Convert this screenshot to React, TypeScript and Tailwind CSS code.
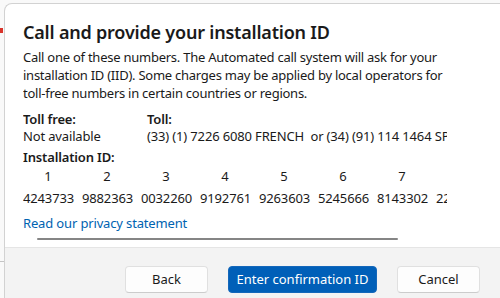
import React from 'react';

const ids = ['4243733', '9882363', '0032260', '9192761', '9263603', '5245666', '8143302', '2213918', '6640451'];

export default function App() {
  return (
    <div
      className="w-[500px] h-[298px] overflow-hidden bg-[#f9f9f9] flex"
      style={{ fontFamily: '"Segoe UI", "Noto Sans", sans-serif' }}
    >
      <div className="w-[4px] shrink-0 flex flex-col">
        <div className="h-[28px]" />
        <div className="w-[3px] h-[5px] bg-[#d9342b]" />
        <div className="h-[228px]" />
        <div className="w-[4px] h-[1px] bg-[#c4c4c4]" />
      </div>

      <div className="mt-[3px] w-[500px] h-[300px] shrink-0 flex flex-col rounded-tl-[8px] border-l border-t border-[#d2d2d2] bg-white overflow-hidden">
        <div className="h-[243px] pl-[18px] pt-[15px] flex flex-col">
          <div className="w-[424px] overflow-hidden text-[#1a1a1a]">
            <h1 className="text-[18px] leading-[26px] font-semibold tracking-[-0.2px] whitespace-nowrap">
              Call and provide your installation ID
            </h1>
            <p className="mt-[3px] text-[13px] leading-[18px] tracking-[-0.25px]">
              Call one of these numbers. The Automated call system will ask for your installation ID (IID). Some charges may be applied by local operators for toll-free numbers in certain countries or regions.
            </p>

            <div className="mt-[9px] flex text-[13px] leading-[17px] tracking-[-0.15px] whitespace-nowrap">
              <div className="w-[124px] shrink-0">
                <div className="font-semibold">Toll free:</div>
                <div>Not available</div>
              </div>
              <div>
                <div className="font-semibold">Toll:</div>
                <div className="whitespace-pre">(33) (1) 7226 6080 FRENCH  or (34) (91) 114 1464 SPANISH</div>
              </div>
            </div>

            <div className="mt-[4px] text-[13px] leading-[17px] tracking-[-0.15px] font-semibold">Installation ID:</div>
            <div className="mt-[1px] flex gap-x-[9px] text-[13px] tracking-[-0.15px] whitespace-nowrap">
              {ids.map((id, i) => (
                <div key={id} className="w-[50px] shrink-0 flex flex-col">
                  <div className="text-center leading-[19px]">{i + 1}</div>
                  <div className="leading-[24px]">{id}</div>
                </div>
              ))}
            </div>

            <a href="#" className="mt-[5px] block text-[13px] leading-[17px] tracking-[-0.15px] text-[#0063b1]">
              Read our privacy statement
            </a>
          </div>
          <div className="mt-[6px] ml-[14px] w-[361px] h-[2px] rounded-full bg-[#858585]" />
        </div>

        <div className="flex-1 border-t border-[#e5e5e5] bg-[#f3f3f3] pt-[18px] pr-[24px] flex justify-end items-start gap-[20px] text-[13px]">
          <button className="w-[83px] h-[27px] rounded-[4px] border border-[#e0e0e0] border-b-[#cccccc] bg-[#fdfdfd] text-[#1a1a1a]">
            Back
          </button>
          <button className="w-[149px] h-[27px] rounded-[4px] bg-[#005fb8] border border-[#1467ba] text-white">
            Enter confirmation ID
          </button>
          <button className="w-[83px] h-[27px] rounded-[4px] border border-[#e0e0e0] border-b-[#cccccc] bg-[#fdfdfd] text-[#1a1a1a]">
            Cancel
          </button>
        </div>
      </div>
    </div>
  );
}
